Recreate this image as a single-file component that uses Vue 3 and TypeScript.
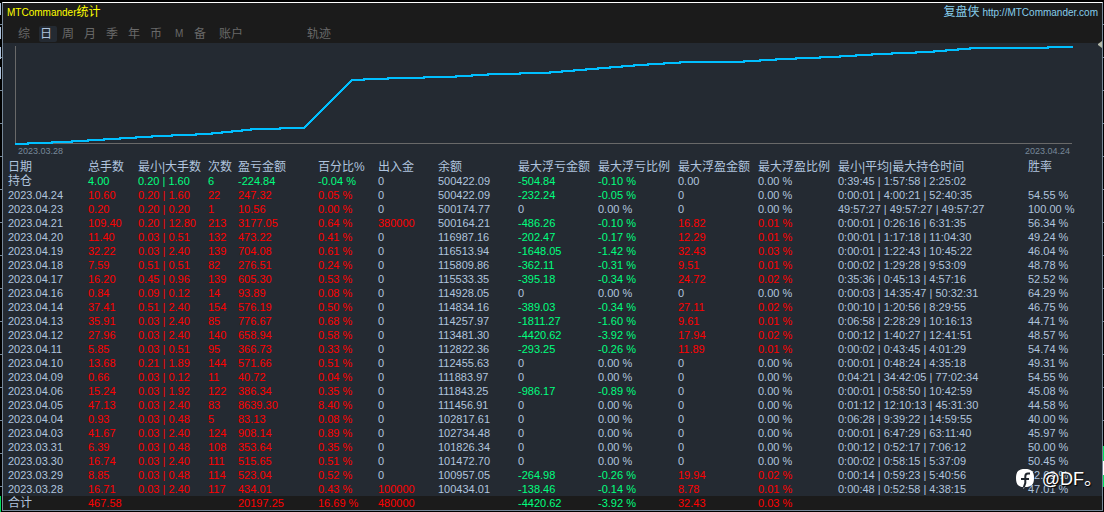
<script setup lang="ts">
import { ref } from 'vue'

interface Column {
  label: string
  width?: number
}

const tabs = ['综', '日', '周', '月', '季', '年', '币', 'M', '备', '账户', '轨迹']
const active = ref('日')

const columns: Column[] = [
  { label: '日期', width: 80 },
  { label: '总手数', width: 50 },
  { label: '最小|大手数', width: 70 },
  { label: '次数', width: 30 },
  { label: '盈亏金额', width: 80 },
  { label: '百分比%', width: 60 },
  { label: '出入金', width: 60 },
  { label: '余额', width: 80 },
  { label: '最大浮亏金额', width: 80 },
  { label: '最大浮亏比例', width: 80 },
  { label: '最大浮盈金额', width: 80 },
  { label: '最大浮盈比例', width: 80 },
  { label: '最小|平均|最大持仓时间', width: 190 },
  { label: '胜率' },
]

const rows: string[][] = [
  ['持仓', '4.00', '0.20 | 1.60', '6', '-224.84', '-0.04 %', '0', '500422.09', '-504.84', '-0.10 %', '0.00', '0.00 %', '0:39:45 | 1:57:58 | 2:25:02', ''],
  ['2023.04.24', '10.60', '0.20 | 1.60', '22', '247.32', '0.05 %', '0', '500422.09', '-232.24', '-0.05 %', '0', '0.00 %', '0:00:01 | 4:00:21 | 52:40:35', '54.55 %'],
  ['2023.04.23', '0.20', '0.20 | 0.20', '1', '10.56', '0.00 %', '0', '500174.77', '0', '0.00 %', '0', '0.00 %', '49:57:27 | 49:57:27 | 49:57:27', '100.00 %'],
  ['2023.04.21', '109.40', '0.20 | 12.80', '213', '3177.05', '0.64 %', '380000', '500164.21', '-486.26', '-0.10 %', '16.82', '0.01 %', '0:00:01 | 0:26:16 | 6:31:35', '56.34 %'],
  ['2023.04.20', '11.40', '0.03 | 0.51', '132', '473.22', '0.41 %', '0', '116987.16', '-202.47', '-0.17 %', '12.29', '0.01 %', '0:00:01 | 1:17:18 | 11:04:30', '49.24 %'],
  ['2023.04.19', '32.22', '0.03 | 2.40', '139', '704.08', '0.61 %', '0', '116513.94', '-1648.05', '-1.42 %', '32.43', '0.03 %', '0:00:01 | 1:22:43 | 10:45:22', '46.04 %'],
  ['2023.04.18', '7.59', '0.51 | 0.51', '82', '276.51', '0.24 %', '0', '115809.86', '-362.11', '-0.31 %', '9.51', '0.01 %', '0:00:02 | 1:29:28 | 9:53:09', '48.78 %'],
  ['2023.04.17', '16.20', '0.45 | 0.96', '139', '605.30', '0.53 %', '0', '115533.35', '-395.18', '-0.34 %', '24.72', '0.02 %', '0:35:36 | 0:45:13 | 4:57:16', '52.52 %'],
  ['2023.04.16', '0.84', '0.09 | 0.12', '14', '93.89', '0.08 %', '0', '114928.05', '0', '0.00 %', '0', '0.00 %', '0:00:03 | 14:35:47 | 50:32:31', '64.29 %'],
  ['2023.04.14', '37.41', '0.51 | 2.40', '154', '576.19', '0.50 %', '0', '114834.16', '-389.03', '-0.34 %', '27.11', '0.02 %', '0:00:10 | 1:20:56 | 8:29:55', '46.75 %'],
  ['2023.04.13', '35.91', '0.03 | 2.40', '85', '776.67', '0.68 %', '0', '114257.97', '-1811.27', '-1.60 %', '9.61', '0.01 %', '0:06:58 | 2:28:29 | 10:16:13', '44.71 %'],
  ['2023.04.12', '27.96', '0.03 | 2.40', '140', '658.94', '0.58 %', '0', '113481.30', '-4420.62', '-3.92 %', '17.94', '0.02 %', '0:00:12 | 1:40:27 | 12:41:51', '48.57 %'],
  ['2023.04.11', '5.85', '0.03 | 0.51', '95', '366.73', '0.33 %', '0', '112822.36', '-293.25', '-0.26 %', '11.89', '0.01 %', '0:00:02 | 0:43:45 | 4:01:29', '54.74 %'],
  ['2023.04.10', '13.68', '0.21 | 1.89', '144', '571.66', '0.51 %', '0', '112455.63', '0', '0.00 %', '0', '0.00 %', '0:00:01 | 0:48:24 | 4:35:18', '49.31 %'],
  ['2023.04.09', '0.66', '0.03 | 0.12', '11', '40.72', '0.04 %', '0', '111883.97', '0', '0.00 %', '0', '0.00 %', '0:04:21 | 34:42:05 | 77:02:34', '54.55 %'],
  ['2023.04.06', '15.24', '0.03 | 1.92', '122', '386.34', '0.35 %', '0', '111843.25', '-986.17', '-0.89 %', '0', '0.00 %', '0:00:01 | 0:58:50 | 10:42:59', '45.08 %'],
  ['2023.04.05', '47.13', '0.03 | 2.40', '83', '8639.30', '8.40 %', '0', '111456.91', '0', '0.00 %', '0', '0.00 %', '0:01:12 | 12:10:13 | 45:31:30', '44.58 %'],
  ['2023.04.04', '0.93', '0.03 | 0.48', '5', '83.13', '0.08 %', '0', '102817.61', '0', '0.00 %', '0', '0.00 %', '0:06:28 | 9:39:22 | 14:59:55', '40.00 %'],
  ['2023.04.03', '41.67', '0.03 | 2.40', '124', '908.14', '0.89 %', '0', '102734.48', '0', '0.00 %', '0', '0.00 %', '0:00:01 | 6:47:29 | 63:11:40', '45.97 %'],
  ['2023.03.31', '6.39', '0.03 | 0.48', '108', '353.64', '0.35 %', '0', '101826.34', '0', '0.00 %', '0', '0.00 %', '0:00:12 | 0:52:17 | 7:06:12', '50.00 %'],
  ['2023.03.30', '16.74', '0.03 | 2.40', '111', '515.65', '0.51 %', '0', '101472.70', '0', '0.00 %', '0', '0.00 %', '0:00:02 | 0:58:15 | 5:37:09', '50.45 %'],
  ['2023.03.29', '8.85', '0.03 | 0.48', '114', '523.04', '0.52 %', '0', '100957.05', '-264.98', '-0.26 %', '19.94', '0.02 %', '0:00:14 | 0:59:23 | 5:40:56', '52.63 %'],
  ['2023.03.28', '16.71', '0.03 | 2.40', '117', '434.01', '0.43 %', '100000', '100434.01', '-138.46', '-0.14 %', '8.78', '0.01 %', '0:00:48 | 0:52:58 | 4:38:15', '47.01 %'],
]

const total = ['合计', '467.58', '', '', '20197.25', '16.69 %', '480000', '', '-4420.62', '-3.92 %', '32.43', '0.03 %', '', '']

// Losses are green, gains are red; idle values stay neutral.
function tone(row: string[], col: number): string {
  if (col === 0 || col === 7 || col >= 12) return ''
  if (col <= 5) return row[4].startsWith('-') ? 'loss' : 'gain'
  if (row[col].startsWith('-')) return 'loss'
  return parseFloat(row[col]) > 0 ? 'gain' : ''
}

// Balance curve: each pair is the x where a new level begins, and that level.
const levels: [number, number][] = [
  [15, 144], [28, 143], [52, 142], [72, 141], [88, 140], [104, 139], [120, 138], [136, 137],
  [152, 136], [172, 135], [196, 134], [212, 133], [222, 132], [232, 131], [242, 130], [251, 129],
  [280, 128],
]
const upper: [number, number][] = [
  [352, 80], [364, 79], [388, 78], [424, 77], [456, 76], [472, 75], [488, 74], [520, 73],
  [550, 72], [562, 71], [574, 70], [586, 69], [598, 68], [610, 67], [622, 66], [634, 65],
  [648, 64], [664, 63], [680, 62], [744, 61], [760, 60], [776, 59], [796, 58], [820, 57],
  [840, 56], [856, 55], [872, 54], [892, 53], [916, 52], [934, 51], [946, 50], [958, 49],
  [970, 48], [1048, 47],
]
const steps = (pts: [number, number][]) => pts.map(([x, y]) => `H${x}V${y}`).join('')
const curve = `M15 144${steps(levels)}H304L352 80${steps(upper)}H1073`
</script>

<template>
  <div class="desk">
    <main class="panel">
      <header class="head">
        <div class="titlebar">
          <h1>MTCommander<span class="han">统计</span></h1>
          <a href="http://MTCommander.com"><span class="han">复盘侠</span> http://MTCommander.com</a>
        </div>
        <nav class="tabs">
          <button
            v-for="t in tabs"
            :key="t"
            type="button"
            :class="{ on: t === active, letter: t === 'M', wide: t === '账户', track: t === '轨迹' }"
            @click="active = t"
          >{{ t }}</button>
        </nav>
      </header>

      <section class="chart">
        <svg viewBox="3 43 1099 102" preserveAspectRatio="none" shape-rendering="crispEdges" aria-hidden="true">
          <path d="M15.5 46V143.5H1072" fill="none" stroke="#696969" stroke-width="1" />
          <path :d="curve" fill="none" stroke="#00bfff" stroke-width="2" />
        </svg>
        <div class="range"><span>2023.03.28</span><span>2023.04.24</span></div>
      </section>

      <table>
        <colgroup>
          <col class="edge">
          <col v-for="c in columns" :key="c.label" :style="c.width ? { width: c.width + 'px' } : {}">
        </colgroup>
        <thead>
          <tr>
            <td></td>
            <th v-for="c in columns" :key="c.label" scope="col">{{ c.label }}</th>
          </tr>
        </thead>
        <tbody>
          <tr v-for="row in rows" :key="row[0]">
            <td></td>
            <td v-for="(v, i) in row" :key="i" :class="[tone(row, i), { han: v === '持仓' }]">{{ v }}</td>
          </tr>
        </tbody>
        <tfoot>
          <tr>
            <td></td>
            <td v-for="(v, i) in total" :key="i" :class="[tone(total, i), { han: i === 0 }]">{{ v }}</td>
          </tr>
        </tfoot>
      </table>

      <svg class="handle" width="4" height="7" viewBox="0 0 4 7" aria-hidden="true">
        <path d="M4 0V7L0 4V3Z" fill="#b4b8a8" />
      </svg>
      <div class="badge">
        <svg width="18" height="20" viewBox="0 0 18 20" aria-hidden="true">
          <path d="M9 0C15.500 0 18 2.500 18 9C18 15.500 15.500 18 9 18L7.500 20V18C2.500 18 0 15.500 0 9C0 2.500 2.500 0 9 0Z" fill="#fff" />
          <path d="M14 4.500H12C9.800 4.500 9.300 5.800 9.300 7.500V14L7.700 18.500M5 10H13" fill="none" stroke="#20262d" stroke-width="2" />
        </svg>
        <span>@DF。</span>
      </div>
    </main>
  </div>
</template>

<style>
body {
  margin: 0;
  background: #000;
}
</style>

<style scoped>
.desk {
  box-sizing: border-box;
  padding: 2px 1px 1px 2px;
  background:
    linear-gradient(#00e05a, #00e05a) 0 100% / 1px 16px no-repeat,
    linear-gradient(#b0c4de, #b0c4de) 0 3px / 1px 12px no-repeat,
    linear-gradient(#b0c4de, #b0c4de) 0 27px / 1px 12px no-repeat,
    linear-gradient(#b0c4de, #b0c4de) 0 47px / 1px 12px no-repeat,
    linear-gradient(#b0c4de, #b0c4de) 0 67px / 1px 12px no-repeat,
    linear-gradient(#fff, #fff) 100% 461px / 1px 14px no-repeat,
    linear-gradient(#00e05a, #00e05a) 100% 446px / 1px 41px no-repeat,
    repeating-linear-gradient(#000 0 24px, #778899 24px 25px, #000 25px 33px);
  font-family: "Liberation Sans", "Noto Sans CJK SC", sans-serif;
  font-size: 11px;
  color: #b0c4de;
}
.panel {
  position: relative;
  background: #242a32;
  border: 1px solid #778899;
  border-top-color: #fff;
}
.head {
  background: #1b1b1b;
}
.titlebar {
  display: flex;
  justify-content: space-between;
  align-items: center;
  height: 19px;
  padding: 0 4px;
  font-size: 10px;
  line-height: 19px;
}
h1 {
  margin: 0;
  font-size: 10px;
  font-weight: 400;
  color: #ff0;
}
.titlebar .han {
  font-size: 12px;
}
a {
  color: #87ceeb;
  text-decoration: none;
}
.tabs {
  display: flex;
  gap: 4px;
  padding: 4px 0 1px 14px;
}
button {
  width: 18px;
  height: 16px;
  padding: 0 1px;
  border: 0;
  border-radius: 2px;
  background: none;
  font: 12px/16px "Liberation Sans", "Noto Sans CJK SC", sans-serif;
  color: #696969;
  text-align: left;
  white-space: nowrap;
}
button.on {
  background: #242a32;
  color: #b0c4de;
}
button.letter {
  padding-left: 4px;
  font-size: 10px;
}
button.wide,
button.track {
  width: 36px;
}
button.wide {
  margin-left: 3px;
}
button.track {
  margin-left: 48px;
}
.chart svg {
  display: block;
  width: 100%;
  height: 102px;
}
.range {
  display: flex;
  justify-content: space-between;
  height: 15px;
  padding: 0 32px 0 15px;
  font-size: 9px;
  line-height: 12px;
  color: #778899;
}
table {
  width: 100%;
  table-layout: fixed;
  border-collapse: collapse;
}
.edge {
  width: 5px;
}
th,
td {
  height: 14px;
  padding: 0;
  line-height: 14px;
  font-weight: 400;
  text-align: left;
  white-space: nowrap;
}
th,
.han {
  font-size: 12px;
}
tfoot {
  background: #1b1b1b;
}
.gain {
  color: #f00;
}
.loss {
  color: #00ff7f;
}
.handle {
  position: absolute;
  top: 38px;
  right: 0;
}
.badge {
  position: absolute;
  right: 0;
  bottom: 19px;
  display: flex;
  align-items: center;
  gap: 8px;
  color: #fff;
  font-size: 18px;
  line-height: 24px;
  text-shadow: 1px 1px 1px #000;
}
</style>
